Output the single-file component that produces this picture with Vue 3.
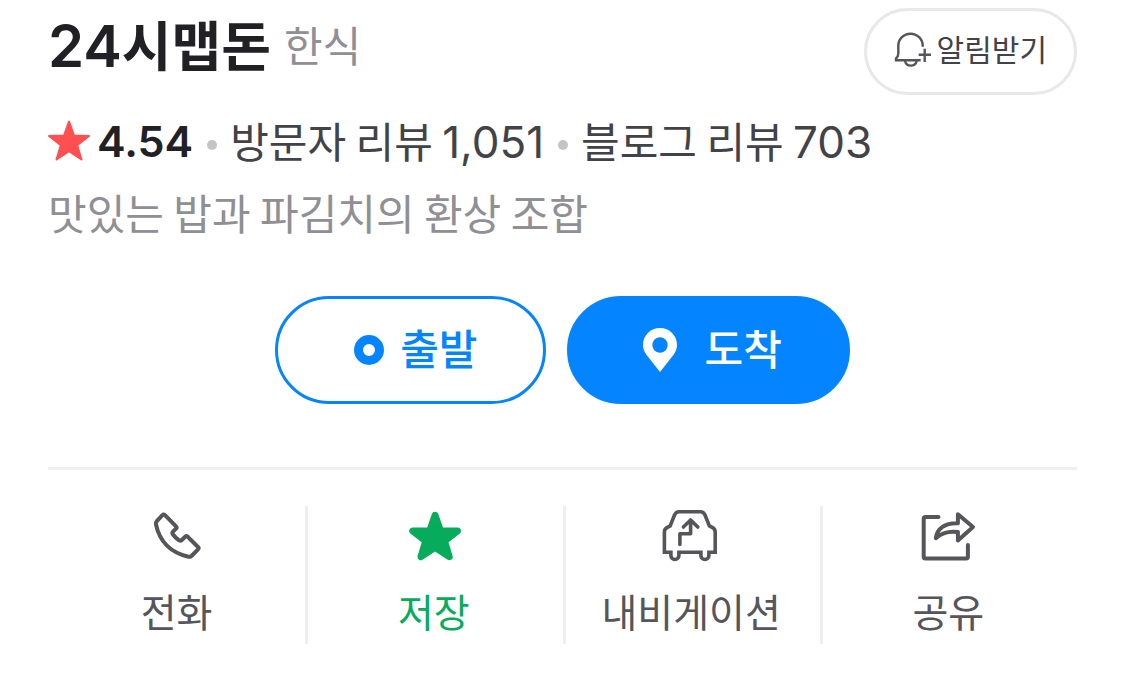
<script setup>
const actions = [
  { id: 'call', label: '전화' },
  { id: 'save', label: '저장', active: true },
  { id: 'navi', label: '내비게이션' },
  { id: 'share', label: '공유' },
]
</script>

<template>
  <main class="place">
    <header class="head">
      <div class="title">
        <h1><span class="title-num">24</span>시맵돈</h1>
        <span class="category">한식</span>
      </div>
      <button type="button" class="notify">
        <svg class="bell" viewBox="0 0 38 38" aria-hidden="true">
          <path d="M29.7 15.7V14.5A12.2 11.8 0 0 0 5.3 14.5V22.5Q5.3 25.5 3 27.5V29.2H27.7" />
          <path d="M12 30C13.5 36.2 22.2 36.2 23.7 30" />
          <path d="M25.7 23.7H38M31.7 17.7V31" />
        </svg>
        <span>알림받기</span>
      </button>
    </header>

    <div class="stats">
      <svg class="star" viewBox="0 0 42 42" aria-hidden="true">
        <path d="M21 1.5L26 15.6L41 16L29.2 25.2L33.5 39.5L21 31.2L8.5 39.5L12.8 25.2L1 16L16 15.6Z" />
      </svg>
      <strong class="score">4.54</strong>
      <i class="dot"></i>
      <a href="#visitor">방문자 리뷰 <span class="num">1,051</span></a>
      <i class="dot"></i>
      <a href="#blog">블로그 리뷰 <span class="num">703</span></a>
    </div>
    <p class="tagline">맛있는 밥과 파김치의 환상 조합</p>

    <div class="route">
      <button type="button" class="pill start">
        <svg class="ring" viewBox="0 0 30 30" aria-hidden="true">
          <circle cx="15" cy="15" r="10.5" />
        </svg>
        <span>출발</span>
      </button>
      <button type="button" class="pill goal">
        <svg class="pin" viewBox="0 0 34 44" aria-hidden="true">
          <path fill-rule="evenodd" d="M17 0C7.5 0 0 7.5 0 17C0 21 1.5 24 4 27.5L17 44L30 27.5C32.5 24 34 21 34 17C34 7.5 26.5 0 17 0ZM17 9.3A7.7 7.7 0 1 1 17 24.7A7.7 7.7 0 1 1 17 9.3Z" />
        </svg>
        <span>도착</span>
      </button>
    </div>

    <nav class="actions">
      <button v-for="a in actions" :key="a.id" type="button" class="action" :class="{ active: a.active }">
        <svg class="icon" viewBox="0 0 60 60" aria-hidden="true">
          <path v-if="a.id === 'call'" d="M15.4 9.2Q16.7 8 18 9.2L29 20.3Q30.2 21.5 29 22.7L26 25.7Q24.8 27 26 28.5Q28.5 32 32 34.2Q33.5 35.2 34.8 34L38.2 30.7Q39.5 29.6 40.8 30.8L51 41Q52.2 42.2 51 43.4L44.5 50Q43.5 51.2 41.5 50.7C24 47 12.5 35.5 9 18.5Q8.6 16.5 9.6 15.4Z" />
          <path v-else-if="a.id === 'save'" class="solid" d="M31.1 9.3L36.5 24.8L53.5 25L40.5 35L45.2 50.7L31.1 41.4L17 50.7L21.7 35L8.8 25L25.7 24.8Z" />
          <template v-else-if="a.id === 'navi'">
            <path class="square" d="M9.9 46.3H3.4V26Q3.4 22.5 7 21L9.2 20L13.5 9Q15 5.7 18 5.7H39.5Q42.5 5.7 44 9L48.4 20L50.6 21Q54.2 22.5 54.2 26V46.3H47.9V49.5A4 4 0 0 1 39.9 49.5V46.3H17.9V49.5A4 4 0 0 1 9.9 49.5Z" />
            <path class="thin" d="M18.9 38.5V27.7H29.6V14.5M22.4 21L29.6 14L36.8 21" />
          </template>
          <template v-else>
            <path d="M20.5 11H7.5Q5.7 11 5.7 12.8V50.7Q5.7 52.5 7.5 52.5H48.1Q49.9 52.5 49.9 50.7V39" />
            <path d="M39.9 8.2L55 21L39.9 34.5V26C32 25 24 26.5 17.8 32.2C19 23 27 16.5 39.9 17.2Z" />
          </template>
        </svg>
        <span>{{ a.label }}</span>
      </button>
    </nav>
  </main>
</template>

<style>
body {
  margin: 0;
  background: #fff;
}
</style>

<style scoped>
.place {
  padding: 8px 48px 33px;
  font-family: "Noto Sans CJK KR", sans-serif;
  font-size: 42px;
  color: #424247;
}
button {
  margin: 0;
  padding: 0;
  border: 0;
  background: none;
  font: inherit;
  color: inherit;
  cursor: pointer;
}
svg {
  display: block;
  flex: none;
}
.num,
.score,
.title-num {
  font-family: Inter, sans-serif;
}
.head {
  display: flex;
  align-items: flex-start;
  justify-content: space-between;
}
.title {
  display: flex;
  align-items: flex-start;
  gap: 13px;
  color: #8f8f94;
}
h1 {
  margin: 0;
  font-size: 54px;
  line-height: 72px;
  font-weight: 700;
  color: #202025;
}
.title-num {
  font-size: 58px;
  font-weight: 600;
}
.category {
  line-height: 72px;
}
.notify {
  display: flex;
  align-items: center;
  gap: 6px;
  height: 87px;
  box-sizing: border-box;
  padding: 0 27px 4px 26px;
  border: 3px solid #e7e7ec;
  border-radius: 44px;
  font-size: 30px;
}
.notify span {
  padding-bottom: 3px;
}
.bell {
  width: 38px;
  height: 38px;
  fill: none;
  stroke: #55555a;
  stroke-width: 2.4;
}
.stats {
  display: flex;
  align-items: center;
  margin-top: 10px;
  line-height: 70px;
}
.star {
  width: 42px;
  height: 42px;
  fill: #ff4f50;
  stroke: #ff4f50;
  stroke-width: 2;
  stroke-linejoin: round;
}
.num {
  font-size: 44px;
}
.score {
  margin-left: 7px;
  font-size: 43px;
  font-weight: 600;
  color: #202025;
}
.dot {
  flex: none;
  width: 10px;
  height: 10px;
  margin: 8px 13px 0 14px;
  border-radius: 50%;
  background: #c4c4c7;
}
a {
  color: inherit;
  text-decoration: none;
}
.tagline {
  margin: 0;
  line-height: 70px;
  color: #8f8f94;
}
.route {
  display: flex;
  justify-content: center;
  gap: 21px;
  margin-top: 49px;
}
.pill {
  display: flex;
  align-items: center;
  height: 108px;
  box-sizing: border-box;
  border: 3px solid #0485ff;
  border-radius: 54px;
  font-weight: 500;
}
.pill span {
  padding-bottom: 8px;
}
.start {
  gap: 16px;
  padding: 0 65px 0 76px;
  color: #0485ff;
}
.goal {
  gap: 28px;
  padding: 0 65px 0 73px;
  background: #0485ff;
  color: #fff;
}
.ring {
  width: 30px;
  height: 30px;
  fill: none;
  stroke: currentColor;
  stroke-width: 9;
}
.pin {
  width: 34px;
  height: 44px;
  fill: currentColor;
}
.actions {
  display: grid;
  grid-template-columns: repeat(4, 1fr);
  margin-top: 63px;
  padding-top: 36px;
  border-top: 3px solid #efeff2;
}
.action {
  display: flex;
  flex-direction: column;
  align-items: center;
  gap: 10px;
  height: 138px;
  font-size: 39px;
  line-height: 68px;
  color: #55555a;
}
.action + .action {
  box-shadow: inset 3px 0 #efeff1;
}
.action.active {
  color: #06ac5b;
}
.icon {
  width: 60px;
  height: 60px;
  fill: none;
  stroke: currentColor;
  stroke-width: 4;
  stroke-linecap: round;
  stroke-linejoin: round;
}
.solid {
  fill: currentColor;
  stroke-width: 7;
}
.square {
  stroke-linejoin: miter;
  stroke-width: 3.6;
}
.thin {
  stroke-width: 3.6;
}
</style>
